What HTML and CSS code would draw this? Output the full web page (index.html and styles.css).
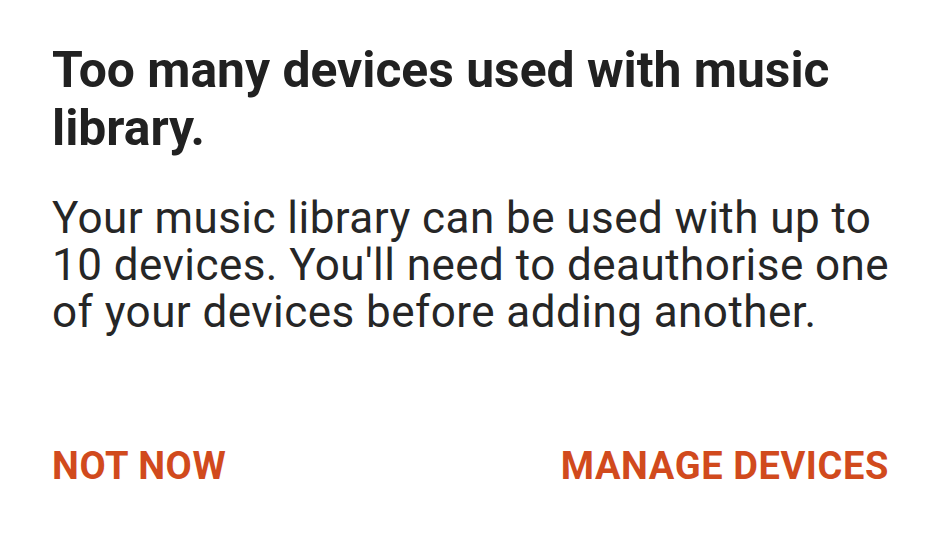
FILE: index.html
```html
<!DOCTYPE html>
<html lang="en">
<head>
    <meta charset="UTF-8">
    <meta name="viewport" content="width=device-width, initial-scale=1.0">
    <title>Device limit</title>
    <link rel="stylesheet" href="styles.css">
</head>
<body>

<div class="dialog">
    <h2 class="dialog-title">Too many devices used with music library.</h2>
    <p class="dialog-message">Your music library can be used with up to 10 devices. You'll need to deauthorise one of your devices before adding another.</p>
    <div class="dialog-actions">
        <button class="dialog-btn">NOT NOW</button>
        <button class="dialog-btn">MANAGE DEVICES</button>
    </div>
</div>

</body>
</html>
```

FILE: styles.css
```css
/* Reset some default styles */
* {
    margin: 0;
    padding: 0;
    box-sizing: border-box;
}

body {
    font-family: 'Roboto', 'Noto Sans', sans-serif;
    background-color: #ffffff;
    color: #212121;
}

/* Dialog box */
.dialog {
    padding: 41px 55px 0 52px;
    display: flex;
    flex-direction: column;
}

.dialog-title {
    font-size: 49.8px;
    font-weight: 700;
    line-height: 58px;
    color: #212121;
}

.dialog-message {
    margin-top: 38px;
    font-size: 44px;
    line-height: 47px;
    letter-spacing: 0.45px;
    color: #262626;
}

/* Buttons */
.dialog-actions {
    margin-top: 110px;
    padding-right: 2px;
    display: flex;
    justify-content: space-between;
}

.dialog-btn {
    background: none;
    border: none;
    font-family: inherit;
    font-size: 38px;
    font-weight: 700;
    line-height: 40px;
    letter-spacing: 0.6px;
    color: #d14a1d;
    cursor: pointer;
}
```
